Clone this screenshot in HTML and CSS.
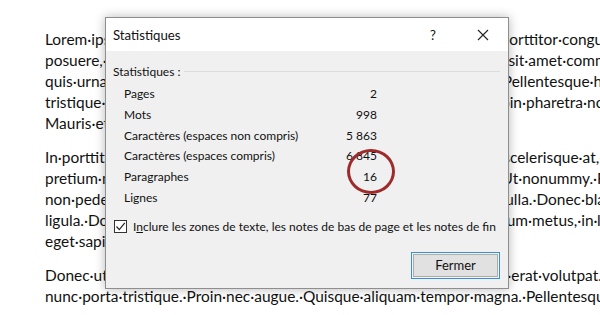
FILE: index.html
```html
<!DOCTYPE html>
<html lang="fr">
<head>
  <meta charset="UTF-8">
  <title>Statistiques</title>
  <link rel="stylesheet" href="styles.css">
</head>
<body>
  <div class="document">
    <p class="para">
      <span class="line">Lorem·ipsum·dolor·sit·amet,·consectetuer·adipiscing·elit.·Maecenas·porttitor·congue·massa.·Fusce·</span>
      <span class="line">posuere,·magna·sed·pulvinar·ultricies,·purus·lectus·malesuada·libero,·sit·amet·commodo·magna·eros·</span>
      <span class="line">quis·urna.·Nunc·viverra·imperdiet·enim.·Fusce·est.·Vivamus·a·tellus.·Pellentesque·habitant·morbi·</span>
      <span class="line">tristique·senectus·et·netus·et·malesuada·fames·ac·turpis·egestas.·Proin·pharetra·nonummy·pede.·</span>
      <span class="line">Mauris·et·orci.</span>
    </p>
    <p class="para">
      <span class="line">In·porttitor.·Donec·laoreet·nonummy·augue.·Suspendisse·dui·purus,·scelerisque·at,·vulputate·vitae,·</span>
      <span class="line">pretium·mattis,·nunc.·Mauris·eget·neque·at·sem·venenatis·eleifend.·Ut·nonummy.·Fusce·aliquet·pede·</span>
      <span class="line">non·pede.·Suspendisse·dapibus·lorem·pellentesque·magna.·Integer·nulla.·Donec·blandit·feugiat·</span>
      <span class="line">ligula.·Donec·hendrerit,·felis·et·imperdiet·euismod,·purus·ipsum·pretium·metus,·in·lacinia·nulla·</span>
      <span class="line">eget·sapien.</span>
    </p>
    <p class="para">
      <span class="line">Donec·ut·est·in·lectus·consequat·consequat.·Etiam·eget·dui.·Aliquam·erat·volutpat.·Sed·at·lorem·in·</span>
      <span class="line">nunc·porta·tristique.·Proin·nec·augue.·Quisque·aliquam·tempor·magna.·Pellentesque·habitant·morbi·</span>
    </p>
  </div>

  <!-- Word count dialog -->
  <div class="dialog">
    <div class="dialog-title">
      <span class="title-text">Statistiques</span>
      <span class="title-help">?</span>
      <span class="title-close">
        <svg width="12" height="12" viewBox="0 0 12 12"><path d="M1 1 L11 11 M11 1 L1 11" stroke="#222" stroke-width="1.1" fill="none"/></svg>
      </span>
    </div>
    <div class="dialog-body">
      <div class="group-label">
        <span>Statistiques :</span>
        <span class="group-rule"></span>
      </div>
      <div class="stats">
        <div class="stat-row"><span>Pages</span><span class="stat-value">2</span></div>
        <div class="stat-row"><span>Mots</span><span class="stat-value">998</span></div>
        <div class="stat-row"><span>Caractères (espaces non compris)</span><span class="stat-value">5 863</span></div>
        <div class="stat-row"><span>Caractères (espaces compris)</span><span class="stat-value">6 845</span></div>
        <div class="stat-row"><span>Paragraphes</span><span class="stat-value">16</span></div>
        <div class="stat-row"><span>Lignes</span><span class="stat-value">77</span></div>
      </div>
      <label class="check-row">
        <span class="checkbox">
          <svg width="11" height="11" viewBox="0 0 11 11"><path d="M1.5 5.5 L4.3 8.6 L9.8 1.8" stroke="#222" stroke-width="1.2" fill="none"/></svg>
        </span>
        <span>I<u>n</u>clure les zones de texte, les notes de bas de page et les notes de fin</span>
      </label>
      <div class="dialog-actions">
        <button class="btn-close">Fermer</button>
      </div>
    </div>
  </div>

  <!-- Red annotation circle -->
  <div class="highlight-ring"></div>
</body>
</html>
```

FILE: styles.css
```css
* {
  box-sizing: border-box;
  margin: 0;
  padding: 0;
}

body {
  font-family: Lato, "Liberation Sans", sans-serif;
  background-color: #fff;
  color: #111;
  width: 600px;
  height: 315px;
  overflow: hidden;
  position: relative;
}

.document {
  padding: 29px 0 0 45px;
  width: 600px;
  overflow: hidden;
}

.para {
  margin-bottom: 13px;
}

.line {
  display: block;
  white-space: nowrap;
  font-size: 15.45px;
  line-height: 21px;
  height: 21px;
}

/* dialog */
.dialog {
  position: absolute;
  left: 105px;
  top: 17px;
  width: 404px;
  height: 272px;
  border: 1px solid #8e8e8e;
  background-color: #f0f0f0;
  box-shadow: 0 0 10px rgba(0, 0, 0, 0.28);
  font-family: Lato, "Liberation Sans", sans-serif;
  font-size: 12px;
  color: #111;
  display: flex;
  flex-direction: column;
}

.dialog-title {
  height: 33px;
  background-color: #fff;
  display: flex;
  align-items: center;
  padding-left: 7px;
  font-size: 13.2px;
}

.title-text {
  flex: 1;
}

.title-help {
  width: 50px;
  text-align: center;
}

.title-close {
  width: 50px;
  display: flex;
  justify-content: center;
}

.dialog-body {
  flex: 1;
  padding: 10px 8px 0 7px;
  display: flex;
  flex-direction: column;
}

.group-label {
  display: flex;
  align-items: center;
  gap: 4px;
  height: 20px;
}

.group-rule {
  flex: 1;
  height: 1px;
  background-color: #dcdcdc;
}

.stats {
  padding: 3px 0 0 11px;
}

.stat-row {
  display: flex;
  width: 253px;
  justify-content: space-between;
  height: 20.8px;
  line-height: 20.8px;
}

.check-row {
  display: flex;
  align-items: center;
  gap: 6px;
  margin-top: 9px;
  height: 18px;
  padding-left: 1px;
  white-space: nowrap;
}

.checkbox {
  width: 13px;
  height: 13px;
  border: 1px solid #333;
  background-color: #fff;
  display: flex;
  align-items: center;
  justify-content: center;
}

.dialog-actions {
  display: flex;
  justify-content: flex-end;
  margin-top: 16px;
}

.btn-close {
  width: 89px;
  height: 27px;
  font-family: inherit;
  font-size: 13px;
  color: #111;
  background-color: #e1e1e1;
  border: 1px solid #3b8fd9;
  box-shadow: inset 0 0 0 1px #f4f4f4, inset 0 0 0 2px #adadad;
}

.highlight-ring {
  position: absolute;
  left: 347px;
  top: 149px;
  width: 48px;
  height: 45px;
  border: 3px solid #9e2a2b;
  border-radius: 50%;
}
```
